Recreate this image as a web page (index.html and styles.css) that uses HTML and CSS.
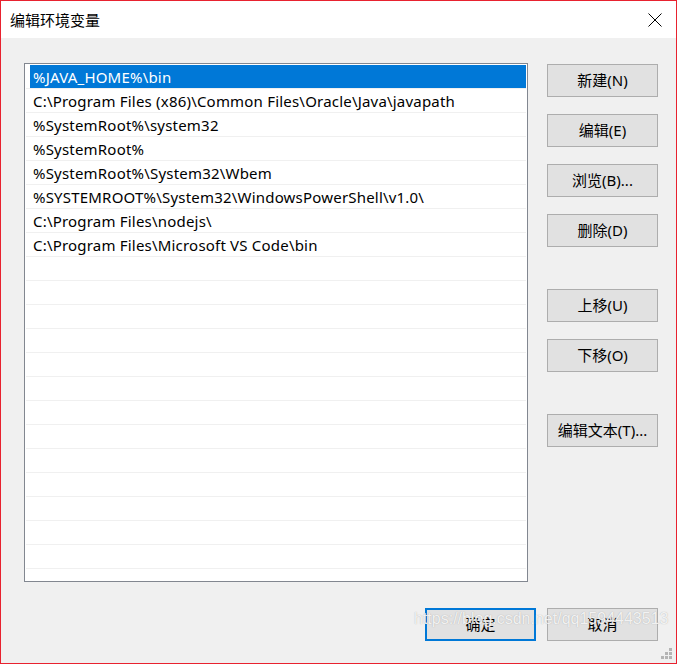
FILE: index.html
```html
<!DOCTYPE html>
<html lang="zh-CN">
<head>
<meta charset="utf-8">
<title>编辑环境变量</title>
<link rel="stylesheet" href="styles.css">
</head>
<body>
<div class="window">
  <div class="titlebar">
    <span class="title">编辑环境变量</span>
    <svg class="close" width="14" height="14" viewBox="0 0 14 14"><path d="M0.5 0.5 L13.5 13.5 M13.5 0.5 L0.5 13.5" stroke="#000" stroke-width="1" fill="none"/></svg>
  </div>
  <div class="main">
    <div class="list">
      <div class="row"><span class="item selected">%JAVA_HOME%\bin</span></div>
      <div class="row"><span class="item">C:\Program Files (x86)\Common Files\Oracle\Java\javapath</span></div>
      <div class="row"><span class="item">%SystemRoot%\system32</span></div>
      <div class="row"><span class="item">%SystemRoot%</span></div>
      <div class="row"><span class="item">%SystemRoot%\System32\Wbem</span></div>
      <div class="row"><span class="item">%SYSTEMROOT%\System32\WindowsPowerShell\v1.0\</span></div>
      <div class="row"><span class="item">C:\Program Files\nodejs\</span></div>
      <div class="row"><span class="item">C:\Program Files\Microsoft VS Code\bin</span></div>
      <div class="row"></div><div class="row"></div><div class="row"></div><div class="row"></div>
      <div class="row"></div><div class="row"></div><div class="row"></div><div class="row"></div>
      <div class="row"></div><div class="row"></div><div class="row"></div><div class="row"></div>
      <div class="row"></div>
    </div>
    <div class="side">
      <div class="group">
        <button class="btn">新建(N)</button>
        <button class="btn">编辑(E)</button>
        <button class="btn">浏览(B)...</button>
        <button class="btn">删除(D)</button>
      </div>
      <div class="group">
        <button class="btn">上移(U)</button>
        <button class="btn">下移(O)</button>
      </div>
      <div class="group">
        <button class="btn">编辑文本(T)...</button>
      </div>
    </div>
  </div>
  <div class="footer">
    <button class="btn default">确定</button>
    <button class="btn">取消</button>
  </div>
  <div class="watermark">https://blog.csdn.net/qq1594443513</div>
  <svg class="grip" width="12" height="12" viewBox="0 0 12 12">
    <rect x="8" y="0" width="3" height="3" fill="#b4b4b4"/>
    <rect x="4" y="4" width="3" height="3" fill="#b4b4b4"/>
    <rect x="8" y="4" width="3" height="3" fill="#b4b4b4"/>
    <rect x="0" y="8" width="3" height="3" fill="#b4b4b4"/>
    <rect x="4" y="8" width="3" height="3" fill="#b4b4b4"/>
    <rect x="8" y="8" width="3" height="3" fill="#b4b4b4"/>
  </svg>
</div>
</body>
</html>
```
FILE: styles.css
```css
html, body {
  margin: 0;
  padding: 0;
  background: #f0f0f0;
}
.window {
  position: relative;
  width: 677px;
  height: 664px;
  box-sizing: border-box;
  border: 1px solid #e8222f;
  background: #f0f0f0;
  display: flex;
  flex-direction: column;
  font-family: "Noto Sans", "Noto Sans CJK SC", sans-serif;
  font-size: 15px;
  color: #000;
  overflow: hidden;
}
.titlebar {
  height: 37px;
  background: #fff;
  display: flex;
  align-items: center;
  justify-content: space-between;
  flex: none;
}
.title {
  margin-left: 9px;
  font-family: "Noto Sans CJK SC", sans-serif;
  font-size: 15px;
}
.close {
  margin-right: 14px;
}
.main {
  display: flex;
  align-items: flex-start;
  padding: 25px 18px 0 23px;
  height: 519px;
  flex: none;
}
.list {
  width: 504px;
  height: 519px;
  box-sizing: border-box;
  border: 1px solid #828790;
  background: #fff;
  padding: 1px 1px 0 1px;
  overflow: hidden;
  flex: none;
}
.row {
  height: 23px;
  border-bottom: 1px solid #f0f0f0;
  display: flex;
}
.item {
  margin-left: 4px;
  padding-left: 3px;
  line-height: 24px;
  white-space: nowrap;
  flex: 1;
  font-family: "Noto Sans", sans-serif;
  font-size: 15px;
  letter-spacing: 0.2px;
}
.item.selected {
  background: #0078d7;
  color: #fff;
}
.side {
  margin-left: 19px;
  padding-top: 1px;
  width: 111px;
  display: flex;
  flex-direction: column;
  gap: 42px;
}
.group {
  display: flex;
  flex-direction: column;
  gap: 17px;
}
.btn {
  width: 111px;
  height: 33px;
  box-sizing: border-box;
  border: 1px solid #adadad;
  background: #e1e1e1;
  font-family: "Noto Sans", "Noto Sans CJK SC", sans-serif;
  font-size: 15px;
  color: #000;
  padding: 0;
  margin: 0;
  line-height: 31px;
  text-align: center;
}
.btn.default {
  border: 2px solid #0078d7;
  line-height: 29px;
}
.footer {
  display: flex;
  justify-content: flex-end;
  gap: 11px;
  padding: 26px 18px 0 0;
}
.watermark {
  position: absolute;
  left: 413px;
  top: 609px;
  font-family: "Liberation Sans", sans-serif;
  font-size: 16px;
  color: rgba(255, 255, 255, 0.85);
  text-shadow: 0 0 1px rgba(120, 120, 120, 0.6);
  white-space: nowrap;
  pointer-events: none;
}
.grip {
  position: absolute;
  right: 3px;
  bottom: 3px;
}
```
